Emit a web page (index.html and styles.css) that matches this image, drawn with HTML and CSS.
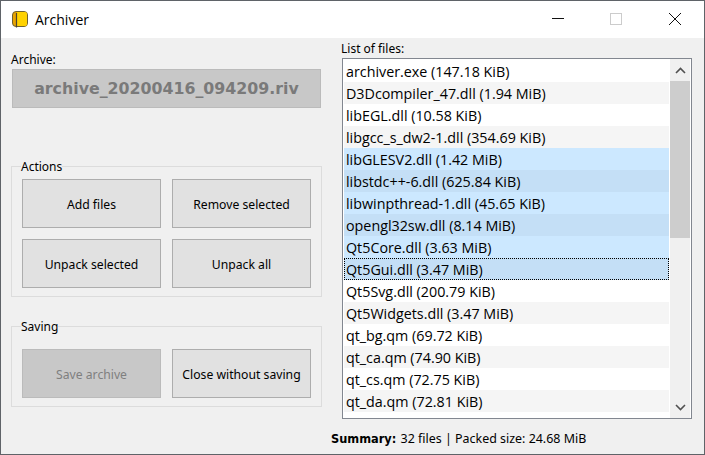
FILE: index.html
```html
<!DOCTYPE html>
<html lang="en">
<head>
    <meta charset="UTF-8">
    <title>Archiver</title>
    <link rel="stylesheet" href="styles.css">
</head>
<body>
    <div class="window">
        <div class="titlebar">
            <svg class="app-icon" width="18" height="18" viewBox="0 0 18 18">
                <rect x="1.5" y="1.5" width="15" height="15" rx="3.5" fill="#e9a400" stroke="#6f6130" stroke-width="1"/>
                <path d="M6 2H14Q16 2 16 4V14Q16 16 14 16H6Z" fill="#ffd200"/>
                <path d="M5.5 3V17.5" stroke="#4a4430" stroke-width="1.2" fill="none"/>
            </svg>
            <span class="title">Archiver</span>
            <div class="controls">
                <div class="control">
                    <svg width="14" height="14" viewBox="0 0 14 14"><path d="M1 6.5H13" stroke="#111" fill="none"/></svg>
                </div>
                <div class="control">
                    <svg width="14" height="14" viewBox="0 0 14 14"><rect x="1.5" y="1.5" width="11" height="11" stroke="#ccc" fill="none"/></svg>
                </div>
                <div class="control close">
                    <svg width="14" height="14" viewBox="0 0 14 14"><path d="M1 1L13 13M13 1L1 13" stroke="#111" fill="none"/></svg>
                </div>
            </div>
        </div>

        <div class="main">
            <div class="left">
                <div class="archive-label">Archive:</div>
                <div class="archive-name">archive_20200416_094209.riv</div>

                <fieldset class="group actions">
                    <legend>Actions</legend>
                    <div class="buttons">
                        <button>Add files</button>
                        <button>Remove selected</button>
                        <button>Unpack selected</button>
                        <button>Unpack all</button>
                    </div>
                </fieldset>

                <fieldset class="group saving">
                    <legend>Saving</legend>
                    <div class="buttons">
                        <button disabled>Save archive</button>
                        <button>Close without saving</button>
                    </div>
                </fieldset>
            </div>

            <div class="right">
                <div class="list-label">List of files:</div>
                <div class="list-box">
                    <div class="files">
                        <div class="file">archiver.exe (147.18 KiB)</div>
                        <div class="file alt">D3Dcompiler_47.dll (1.94 MiB)</div>
                        <div class="file">libEGL.dll (10.58 KiB)</div>
                        <div class="file alt">libgcc_s_dw2-1.dll (354.69 KiB)</div>
                        <div class="file selected">libGLESV2.dll (1.42 MiB)</div>
                        <div class="file selected alt">libstdc++-6.dll (625.84 KiB)</div>
                        <div class="file selected">libwinpthread-1.dll (45.65 KiB)</div>
                        <div class="file selected alt">opengl32sw.dll (8.14 MiB)</div>
                        <div class="file selected">Qt5Core.dll (3.63 MiB)</div>
                        <div class="file selected alt current">Qt5Gui.dll (3.47 MiB)</div>
                        <div class="file">Qt5Svg.dll (200.79 KiB)</div>
                        <div class="file alt">Qt5Widgets.dll (3.47 MiB)</div>
                        <div class="file">qt_bg.qm (69.72 KiB)</div>
                        <div class="file alt">qt_ca.qm (74.90 KiB)</div>
                        <div class="file">qt_cs.qm (72.75 KiB)</div>
                        <div class="file alt">qt_da.qm (72.81 KiB)</div>
                    </div>
                    <div class="scrollbar">
                        <div class="arrow">
                            <svg width="11" height="7" viewBox="0 0 11 7"><path d="M1 6L5.5 1.5L10 6" stroke="#505050" stroke-width="1.6" fill="none"/></svg>
                        </div>
                        <div class="track"><div class="thumb"></div></div>
                        <div class="arrow">
                            <svg width="11" height="7" viewBox="0 0 11 7"><path d="M1 1L5.5 5.5L10 1" stroke="#505050" stroke-width="1.6" fill="none"/></svg>
                        </div>
                    </div>
                </div>
                <div class="summary"><b>Summary:</b> 32 files | Packed size: 24.68 MiB</div>
            </div>
        </div>
    </div>
</body>
</html>
```

FILE: styles.css
```css
* {
    box-sizing: border-box;
}
body {
    margin: 0;
    font-family: "Noto Sans", sans-serif;
    font-size: 12px;
    color: #000;
}
.window {
    width: 705px;
    height: 455px;
    border: 1px solid #5f6368;
    background-color: #f0f0f0;
    overflow: hidden;
}
.titlebar {
    display: flex;
    align-items: center;
    height: 37px;
    padding-left: 10px;
    padding-bottom: 1px;
    background-color: #fff;
}
.app-icon {
    margin-right: 6px;
}
.title {
    font-family: "Open Sans", sans-serif;
    font-size: 14px;
}
.controls {
    display: flex;
    margin-left: auto;
}
.control {
    display: flex;
    justify-content: center;
    align-items: center;
    width: 58px;
    height: 36px;
}
.close {
    width: 59px;
}
.main {
    display: flex;
    padding-left: 10px;
}
.left {
    width: 311px;
    padding-top: 15px;
}
.archive-label {
    height: 16px;
    line-height: 14px;
}
.archive-name {
    height: 39px;
    margin-left: 1px;
    margin-right: 1px;
    border: 1px solid #bbb;
    background-color: #c8c8c8;
    color: #7a7a7a;
    font-family: "DejaVu Sans", sans-serif;
    font-size: 15.8px;
    font-weight: bold;
    line-height: 37px;
    text-align: center;
}
.group {
    margin: 0;
    padding: 6px 10px 8px;
    border: 1px solid #dcdcdc;
}
.group legend {
    margin-left: -1px;
    padding: 1px 0 0;
    height: 14px;
    line-height: 14px;
}
.actions {
    margin-top: 51px;
}
.saving {
    margin-top: 22px;
}
.saving .buttons {
    padding-top: 10px;
}
.buttons {
    display: grid;
    grid-template-columns: 139px 139px;
    grid-auto-rows: 49px;
    gap: 11px;
}
.buttons button {
    padding: 2px 0 0;
    border: 1px solid #adadad;
    background-color: #e1e1e1;
    color: #000;
    font-family: "Noto Sans", sans-serif;
    font-size: 12.2px;
}
.buttons button:disabled {
    border-color: #bbb;
    background-color: #c8c8c8;
    color: #7f7f7f;
}
.right {
    width: 350px;
    margin-left: 19px;
    padding-top: 4px;
}
.list-label {
    height: 16px;
    line-height: 14px;
}
.list-box {
    display: flex;
    width: 350px;
    height: 361px;
    margin-left: 1px;
    border: 1px solid #828790;
    background-color: #fff;
}
.files {
    flex: 1;
    padding: 1px 0 0 1px;
    overflow: hidden;
}
.file {
    height: 22px;
    padding-left: 2px;
    padding-top: 1px;
    font-family: "Open Sans", sans-serif;
    font-size: 14.3px;
    line-height: 21px;
    white-space: nowrap;
}
.alt {
    background-color: #f5f5f5;
}
.selected {
    background-color: #cce8ff;
}
.selected.alt {
    background-color: #c4dff6;
}
.current {
    outline: 1px dotted #000;
    outline-offset: -1px;
}
.scrollbar {
    display: flex;
    flex-direction: column;
    width: 20px;
    margin: 0 1px 0 1px;
    background-color: #f0f0f0;
}
.arrow {
    display: flex;
    justify-content: center;
    align-items: center;
    height: 22px;
}
.track {
    flex: 1;
}
.thumb {
    height: 157px;
    background-color: #cdcdcd;
}
.summary {
    margin-top: 13px;
    margin-left: -10px;
    font-size: 12.45px;
    line-height: 14px;
}
.summary b {
    font-family: "DejaVu Sans", sans-serif;
    font-size: 11.4px;
    margin-right: 1px;
}
```
